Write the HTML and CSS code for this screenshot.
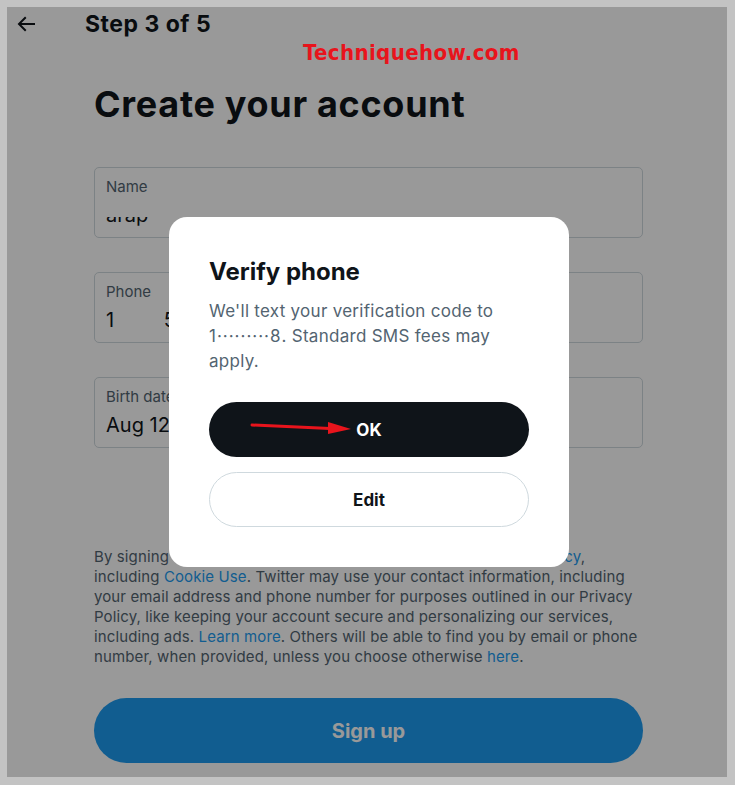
FILE: index.html
```html
<!DOCTYPE html>
<html lang="en">
<head>
  <meta charset="UTF-8" />
  <meta name="viewport" content="width=device-width, initial-scale=1.0"/>
  <title>Create your account</title>
  <link rel="stylesheet" href="styles.css">
</head>
<body>
  <div class="screen">
    <div class="topbar">
      <svg class="back" viewBox="0 0 24 24" width="24" height="24">
        <path d="M7.414 13l5.043 5.04-1.414 1.42L3.586 12l7.457-7.46 1.414 1.42L7.414 11H21v2H7.414z"/>
      </svg>
      <span class="step">Step 3 of 5</span>
    </div>

    <div class="main">
      <h1>Create your account</h1>

      <div class="field">
        <div class="label">Name</div>
        <div class="clip"><span class="value">arap</span></div>
      </div>

      <div class="field">
        <div class="label">Phone</div>
        <div class="value">1 <span class="num">555 0142</span></div>
      </div>

      <div class="field">
        <div class="label">Birth date</div>
        <div class="value">Aug 12, 1998</div>
      </div>

      <p class="legal">
        By signing up, you agree to the <a href="#">Terms of Service</a> and <a href="#">Privacy Policy</a>,
        including <a href="#">Cookie Use</a>. Twitter may use your contact information, including
        your email address and phone number for purposes outlined in our Privacy
        Policy, like keeping your account secure and personalizing our services,
        including ads. <a href="#">Learn more</a>. Others will be able to find you by email or phone
        number, when provided, unless you choose otherwise <a href="#">here</a>.
      </p>

      <button class="signup" type="button">Sign up</button>
    </div>

    <div class="backdrop">
      <div class="modal">
        <h2>Verify phone</h2>
        <p>We'll text your verification code to <span class="masked">1&middot;&middot;&middot;&middot;&middot;&middot;&middot;&middot;&middot;8</span>. Standard SMS fees may apply.</p>
        <button class="btn btn-dark" type="button">OK</button>
        <button class="btn btn-light" type="button">Edit</button>
      </div>
    </div>

    <div class="watermark">Techniquehow.com</div>
    <svg class="pointer" width="110" height="16" viewBox="0 0 110 16">
      <path d="M2 5 L80 8.5" stroke="#e8141c" stroke-width="3" stroke-linecap="round"/>
      <path d="M78 2 L101 9 L78 14 Z" fill="#e8141c"/>
    </svg>
  </div>
</body>
</html>
```

FILE: styles.css
```css
body {
  margin: 0;
  padding: 7px;
  background-color: #c3c3c3;
  font-family: Inter, "Liberation Sans", sans-serif;
  color: #0f1419;
}

.screen {
  position: relative;
  width: 720px;
  height: 770px;
  overflow: hidden;
  background-color: #fff;
}

.topbar {
  display: flex;
  align-items: center;
  height: 33px;
  padding-left: 7px;
}

.back {
  fill: #0f1419;
}

.step {
  margin-left: 47px;
  font-size: 23px;
  font-weight: 700;
  letter-spacing: 0.5px;
}

.main {
  width: 549px;
  margin-left: 87px;
}

h1 {
  margin: 42px 0 41px;
  font-size: 36px;
  line-height: 44px;
  font-weight: 700;
  letter-spacing: 0.7px;
}

.field {
  box-sizing: border-box;
  height: 71px;
  margin-bottom: 34px;
  padding: 8px 11px 0;
  border: 1px solid #cfd9de;
  border-radius: 5px;
}

.label {
  font-size: 15px;
  line-height: 22px;
  color: #536471;
}

.value {
  display: block;
  margin-top: 4px;
  font-size: 20px;
  line-height: 26px;
}

.num {
  margin-left: 44px;
}

.clip {
  height: 10px;
  margin-top: 19px;
  overflow: hidden;
}

.clip .value {
  margin-top: -15px;
}

.legal {
  margin: 99px 0 31px;
  font-size: 15px;
  line-height: 20px;
  letter-spacing: 0.12px;
  color: #536471;
}

.legal a {
  color: #1d9bf0;
  text-decoration: none;
}

.signup {
  display: block;
  width: 100%;
  height: 65px;
  border: none;
  border-radius: 33px;
  background-color: #1d9bf0;
  color: #fff;
  font-family: inherit;
  font-size: 20px;
  font-weight: 700;
}

.backdrop {
  position: absolute;
  inset: 0;
  display: flex;
  align-items: center;
  justify-content: center;
  padding-left: 4px;
  background-color: rgba(0, 0, 0, 0.4);
}

.modal {
  box-sizing: border-box;
  width: 400px;
  height: 350px;
  padding: 40px 40px 0;
  border-radius: 18px;
  background-color: #fff;
}

.modal h2 {
  margin: 0;
  font-size: 24px;
  line-height: 30px;
  font-weight: 700;
}

.modal p {
  margin: 12px 0 28px;
  font-size: 17px;
  line-height: 25px;
  letter-spacing: 0.28px;
  color: #536471;
}

.masked {
  letter-spacing: 1px;
}

.btn {
  display: block;
  box-sizing: border-box;
  width: 100%;
  height: 55px;
  border-radius: 28px;
  font-family: inherit;
  font-size: 17px;
  font-weight: 700;
}

.btn-dark {
  border: none;
  background-color: #0f1419;
  color: #fff;
}

.btn-light {
  margin-top: 15px;
  border: 1px solid #cfd9de;
  background-color: #fff;
  color: #0f1419;
}

.watermark {
  position: absolute;
  left: 296px;
  top: 33px;
  font-family: "DejaVu Sans Condensed", "DejaVu Sans", sans-serif;
  font-size: 22px;
  font-weight: 700;
  letter-spacing: 0.4px;
  color: #e8141c;
}

.pointer {
  position: absolute;
  left: 243px;
  top: 413px;
}
```
